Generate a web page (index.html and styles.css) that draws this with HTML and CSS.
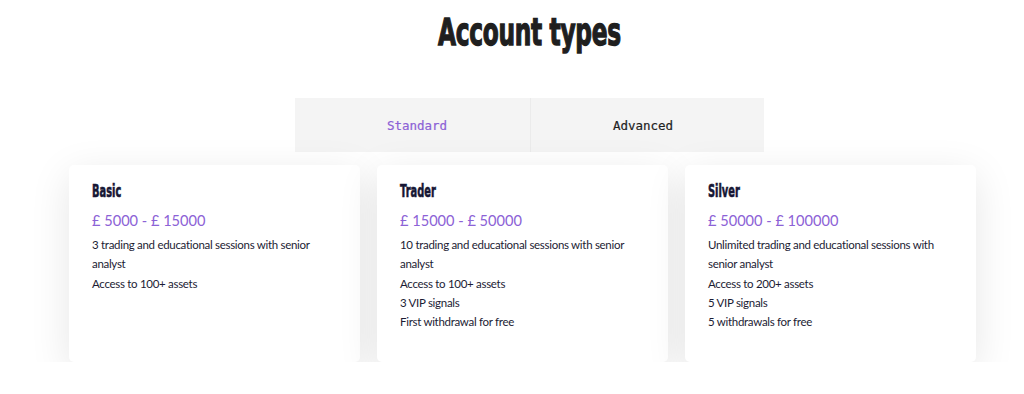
FILE: index.html
```html
<!DOCTYPE html>
<html lang="en">
<head>
<meta charset="utf-8">
<title>Account types</title>
<link rel="stylesheet" href="styles.css">
</head>
<body>
<section class="accounts">
  <header class="accounts-head">
    <h1 class="accounts-title"><span class="squeeze">Account types</span></h1>
    <div class="tabs">
      <button class="tab tab-active">Standard</button>
      <button class="tab">Advanced</button>
    </div>
  </header>
  <div class="cards">
    <article class="card">
      <h2 class="card-title"><span class="squeeze">Basic</span></h2>
      <p class="card-price">£ 5000 - £ 15000</p>
      <ul class="card-list">
        <li>3 trading and educational sessions with senior analyst</li>
        <li>Access to 100+ assets</li>
      </ul>
    </article>
    <article class="card">
      <h2 class="card-title"><span class="squeeze">Trader</span></h2>
      <p class="card-price">£ 15000 - £ 50000</p>
      <ul class="card-list">
        <li>10 trading and educational sessions with senior analyst</li>
        <li>Access to 100+ assets</li>
        <li>3 VIP signals</li>
        <li>First withdrawal for free</li>
      </ul>
    </article>
    <article class="card">
      <h2 class="card-title"><span class="squeeze">Silver</span></h2>
      <p class="card-price">£ 50000 - £ 100000</p>
      <ul class="card-list">
        <li>Unlimited trading and educational sessions with senior analyst</li>
        <li>Access to 200+ assets</li>
        <li>5 VIP signals</li>
        <li>5 withdrawals for free</li>
      </ul>
    </article>
  </div>
</section>
</body>
</html>
```
FILE: styles.css
```css
* { box-sizing: border-box; }

html, body {
  margin: 0;
  background: #ffffff;
}

body {
  font-family: "Lato", "Liberation Sans", sans-serif;
  color: #1c1c34;
  overflow: hidden;
}

.accounts {
  width: 1024px;
  padding-top: 11px;
}

.accounts-head {
  display: flex;
  flex-direction: column;
  align-items: center;
  padding-left: 34px;
}

/* condensed display face: a bold sans squeezed horizontally and thickened */
.squeeze {
  display: inline-block;
  transform-origin: left center;
}

.accounts-title {
  margin: 0;
  width: 182px;
  white-space: nowrap;
  font-family: "DejaVu Sans", "Liberation Sans", sans-serif;
  font-weight: 700;
  font-size: 37px;
  line-height: 44px;
  letter-spacing: -0.5px;
  color: #1f1f1f;
}

.accounts-title .squeeze {
  transform: scaleX(0.63);
  -webkit-text-stroke: 1.4px #1f1f1f;
}

.tabs {
  margin-top: 43px;
  display: flex;
  width: 469px;
  height: 54px;
  background: #f4f4f4;
}

.tab {
  flex: 1;
  border: 0;
  background: transparent;
  font-family: "DejaVu Sans Mono", "Liberation Mono", monospace;
  font-size: 12.5px;
  color: #1f1f1f;
  padding: 0;
  -webkit-text-stroke: 0.2px currentColor;
}

.tab-active {
  padding-left: 10px;
  color: #8c62d6;
}

.tab + .tab {
  border-left: 1px solid #ebebeb;
  padding-right: 8px;
}

.cards {
  display: flex;
  gap: 17px;
  padding-left: 69px;
  margin-top: 13px;
}

.card {
  width: 291px;
  height: 197px;
  background: #ffffff;
  border-radius: 5px;
  box-shadow: 0 10px 40px rgba(0, 0, 0, 0.1);
  padding: 16px 23px;
}

.card-title {
  margin: 0;
  white-space: nowrap;
  font-family: "DejaVu Sans", "Liberation Sans", sans-serif;
  font-weight: 700;
  font-size: 17px;
  line-height: 20px;
  color: #161634;
}

.card-title .squeeze {
  transform: scaleX(0.58);
  -webkit-text-stroke: 0.6px #161634;
}

.card-price {
  margin: 10px 0 4px;
  font-size: 14.6px;
  line-height: 20px;
  color: #8c62d6;
  font-weight: 400;
}

.card-list {
  list-style: none;
  margin: 0;
  padding: 0;
  font-size: 11.5px;
  letter-spacing: -0.3px;
  line-height: 19.3px;
  color: #1c1c34;
}
```
